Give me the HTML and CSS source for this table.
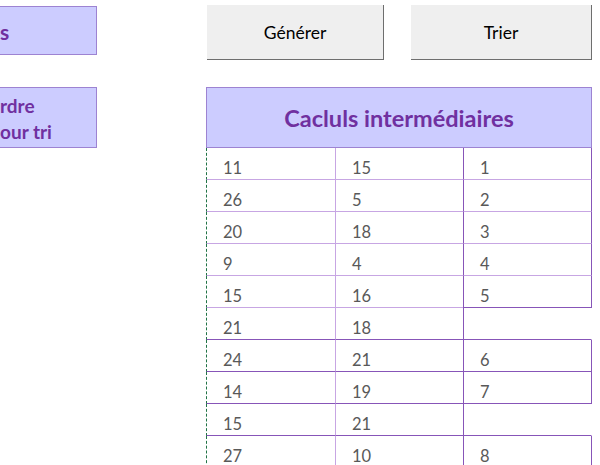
FILE: index.html
```html
<!DOCTYPE html>
<html lang="fr">
<head>
<meta charset="utf-8">
<title>Cacluls intermédiaires</title>
<link rel="stylesheet" href="styles.css">
</head>
<body>
<div class="sheet">
  <div class="left">
    <div class="label label-one">s</div>
    <div class="label label-two">rdre<br>our tri</div>
  </div>
  <div class="right">
    <div class="buttons">
      <div class="btn btn-gen">Générer</div>
      <div class="btn btn-sort">Trier</div>
    </div>
    <div class="title">Cacluls intermédiaires</div>
    <div class="grid">
      <div class="c c1 lt">11</div><div class="c c2 lt">15</div><div class="c c3 lt r">1</div>
      <div class="c c1 lt">26</div><div class="c c2 lt">5</div><div class="c c3 lt r">2</div>
      <div class="c c1 lt">20</div><div class="c c2 lt">18</div><div class="c c3 lt r">3</div>
      <div class="c c1 lt">9</div><div class="c c2 lt">4</div><div class="c c3 lt r">4</div>
      <div class="c c1 lt">15</div><div class="c c2 lt">16</div><div class="c c3 dk r">5</div>
      <div class="c c1 dk">21</div><div class="c c2 dk">18</div><div class="c c3 dk"></div>
      <div class="c c1 dk">24</div><div class="c c2 dk">21</div><div class="c c3 dk r">6</div>
      <div class="c c1 dk">14</div><div class="c c2 dk">19</div><div class="c c3 dk r">7</div>
      <div class="c c1 dk">15</div><div class="c c2 dk">21</div><div class="c c3 dk"></div>
      <div class="c c1 dk">27</div><div class="c c2 dk">10</div><div class="c c3 dk r">8</div>
    </div>
  </div>
</div>
</body>
</html>
```
FILE: styles.css
```css
html, body {
  margin: 0;
  padding: 0;
  background: #ffffff;
  overflow: hidden;
}
body {
  font-family: Lato, "Open Sans", "Liberation Sans", sans-serif;
  width: 600px;
  height: 465px;
}
.sheet {
  display: flex;
  align-items: flex-start;
}
.left {
  width: 97px;
  display: flex;
  flex-direction: column;
}
.label {
  box-sizing: border-box;
  background: #ccccff;
  border: 1px solid #9d83d2;
  border-left: none;
  color: #7030a0;
  font-weight: bold;
  font-size: 19px;
  white-space: nowrap;
}
.label-one {
  margin-top: 6px;
  height: 49px;
  line-height: 49px;
  font-size: 21px;
}
.label-two {
  margin-top: 32px;
  height: 61px;
  padding-top: 5px;
  line-height: 26px;
}
.right {
  margin-left: 109px;
  width: 386px;
  display: flex;
  flex-direction: column;
}
.buttons {
  display: flex;
  gap: 27px;
  margin-top: 5px;
  padding-left: 1px;
}
.btn {
  box-sizing: border-box;
  background: #efefef;
  border-right: 1px solid #6e6e6e;
  border-bottom: 1px solid #6e6e6e;
  height: 55px;
  line-height: 55px;
  text-align: center;
  font-size: 17.5px;
  color: #000000;
}
.btn-gen { width: 177px; }
.btn-sort { width: 181px; }
.title {
  box-sizing: border-box;
  margin-top: 27px;
  height: 61px;
  background: #ccccff;
  border: 1px solid #9d83d2;
  color: #7030a0;
  font-weight: bold;
  font-size: 23.5px;
  text-align: center;
  line-height: 60px;
}
.grid {
  display: grid;
  grid-template-columns: 129px 128px 129px;
  grid-auto-rows: 32px;
}
.c {
  box-sizing: border-box;
  padding: 11px 0 0 16px;
  font-size: 16.5px;
  line-height: 19px;
  color: #595959;
}
.c1 { border-left: 1px dashed #217346; }
.c2 { border-left: 1px solid #c7a6e3; }
.c3 { border-left: 1px solid #8755b8; }
.r { border-right: 1px solid #8755b8; }
.c3:not(.r) { border-right: 1px solid transparent; }
.lt { border-bottom: 1px solid #c7a6e3; }
.dk { border-bottom: 1px solid #8755b8; }
```
